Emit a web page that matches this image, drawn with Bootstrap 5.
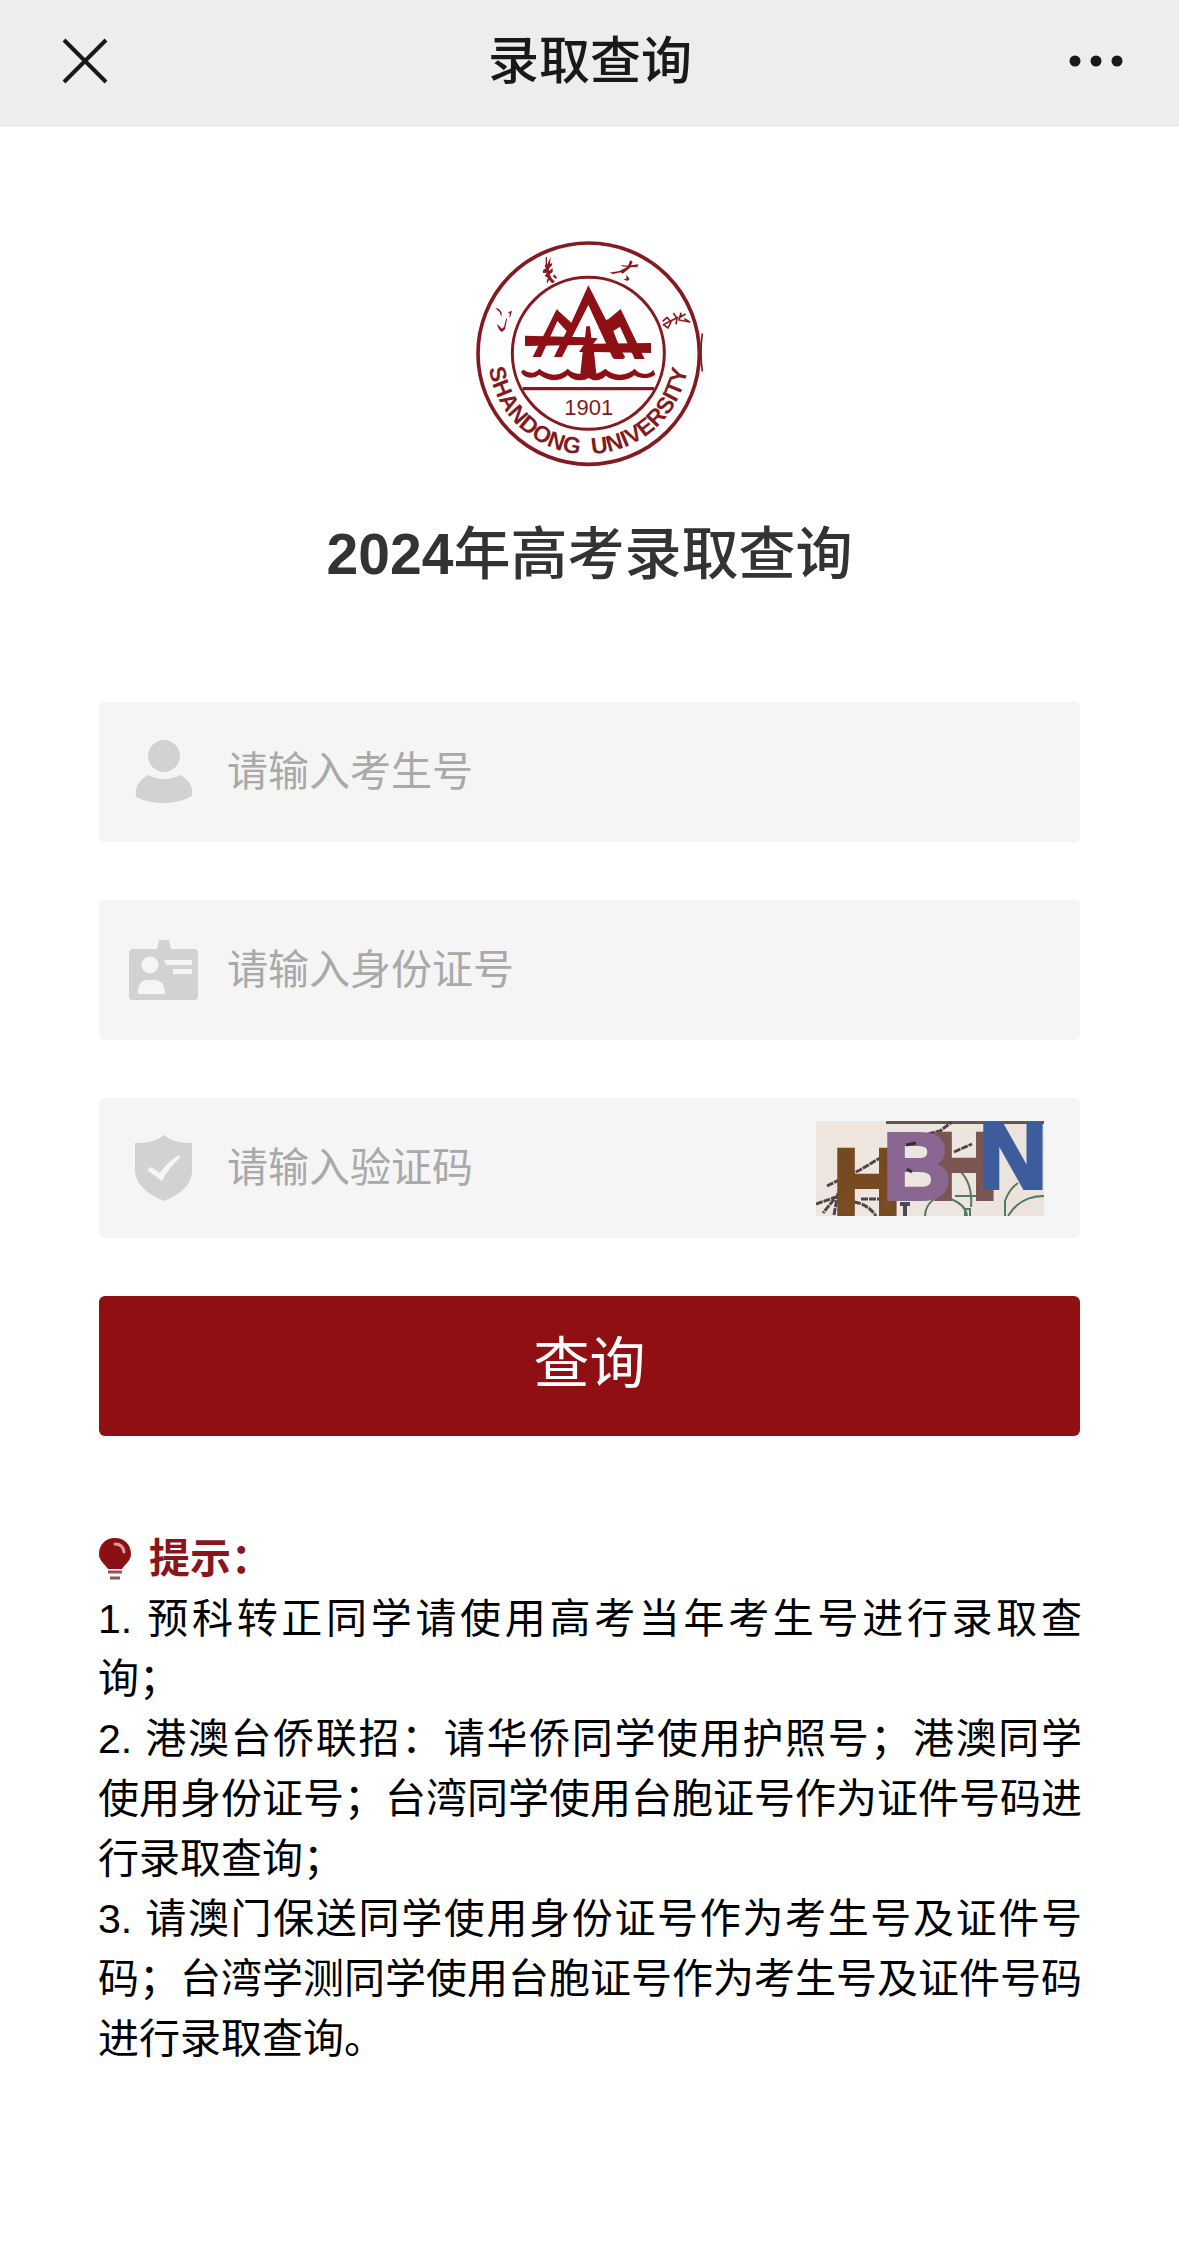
<!DOCTYPE html>
<html lang="zh-CN">
<head>
<meta charset="utf-8">
<meta name="viewport" content="width=device-width, initial-scale=1">
<title>录取查询</title>
<link href="https://cdn.jsdelivr.net/npm/bootstrap@5.3.0/dist/css/bootstrap.min.css" rel="stylesheet">
<style>
  body { font-family: "Liberation Sans", "Noto Sans CJK SC", sans-serif; color: #000; background: #fff; }
  .topbar { background: #ededed; height: 127px; padding: 0 56px 3px 57px; color: #191919; }
  .topbar-title { font-size: 51px; line-height: 60px; font-weight: 500; }
  .topbar .btn { width: 56px; height: 56px; }
  .page { padding: 98px 99px 120px; }
  .emblem { width: 260px; height: 255px; }
  .page-title { font-size: 57px; line-height: 80px; color: #333; font-weight: 500; margin: 34px 0 108px; }
  .field-list { gap: 58px; }
  .field { height: 140px; background: #f5f5f5; border-radius: 5px; padding: 0 36px 0 30px; }
  .field-icon { width: 69px; height: 72px; }
  .field .form-control { font-size: 41px; line-height: 60px; color: #333; padding: 0 0 0 29px; }
  .field .form-control::placeholder { color: #a9a9a9; opacity: 1; }
  .captcha { width: 228px; height: 95px; }
  .btn-query { height: 140px; background: #8f0f13; color: #fff; font-size: 56px; line-height: 80px; border-radius: 6px; padding: 0 0 4px; }
  .btn-query:hover, .btn-query:active { background: #7a0c10; color: #fff; }
  .tips { margin: 93px -2px 0 -1px; font-size: 41px; line-height: 60px; }
  .tips-head { color: #8a161b; font-size: 41px; line-height: 60px; font-weight: 700; gap: 17px; }
  .tips-text { text-align: justify; }
</style>
</head>
<body>
<header class="topbar d-flex align-items-center justify-content-between">
  <button type="button" class="btn border-0 p-0 d-flex" aria-label="关闭">
    <svg width="56" height="56" viewBox="0 0 56 56" fill="none" stroke="#191919" stroke-width="4"><path d="M7 6 49 48M49 6 7 48"/></svg>
  </button>
  <div class="topbar-title">录取查询</div>
  <button type="button" class="btn border-0 p-0 d-flex" aria-label="更多">
    <svg width="56" height="56" viewBox="0 0 56 56" fill="#191919"><circle cx="8" cy="27" r="5.5"/><circle cx="29" cy="27" r="5.5"/><circle cx="50" cy="27" r="5.5"/></svg>
  </button>
</header>

<main class="page">
  <div class="d-flex justify-content-center">
    <svg class="emblem" viewBox="0 0 780 765" role="img" aria-label="山东大学校徽">
      <defs>
        <path id="arcLeft" d="M87 430A301 301 0 0 0 410 687"/>
        <path id="arcRight" d="M396 687A301 301 0 0 0 686 390"/>
      </defs>
      <g fill="none" stroke="#841a20">
        <circle cx="386" cy="386" r="332" stroke-width="11"/>
        <circle cx="385" cy="385" r="228" stroke-width="9"/>
        <path d="M188 491H582" stroke-width="10"/>
        <path d="M727 325Q719 382 727 440" stroke-width="5"/>
      </g>
      <g fill="#8e1015">
        <!-- peaks -->
        <path d="M385 181 496 398H458L385 240 306 396H282L320 318 292 288 243 396H218L290 253 334 293Z"/>
        <path d="M425 290 446 282 482 252 554 402H524L480 305 460 318 492 402H462L440 350Z"/>
        <!-- bands and trunk -->
        <path d="M195 332 375 337 379 304H390L394 338 413 340 400 356 573 354V384L402 381 409 446Q425 440 437 431 448 445 478 449 508 447 524 431 534 445 556 447 574 444 580 434L586 449Q572 460 548 459 532 457 523 451 508 465 478 466 450 463 438 452 425 466 400 466L386 459Q370 470 345 464 330 459 323 451 308 464 282 466 256 463 238 449 222 462 200 456 186 450 183 440L190 434Q205 445 219 443 232 440 238 431 252 445 282 449 308 447 323 431 336 445 361 447L368 381H357L371 360 195 363Z"/>
      </g>
      <!-- brush characters round the rim -->
      <g fill="#8a1a20">
        <path d="M105 248 117 252 125 263 124 276 119 262ZM110 297 119 304 125 311 132 306 139 278 141 283 135 313 126 321 118 315ZM144 262 156 257 152 273 147 279 150 267Z"/>
        <path d="M257 95 261 97 261 120 272 96 270 118 277 113 276 121 268 129 266 138 278 130 278 141 269 148 275 160 285 170 276 175 267 164 262 176 260 168 264 158 254 153 261 143 249 144 249 135 258 130 254 124 257 117ZM283 148 292 159 286 161 279 154Z"/>
        <path d="M447 143 478 138 502 126 487 124 482 120 504 122 511 106 518 110 513 121 536 118 532 126 512 127 488 146 482 142 460 147ZM499 149 509 162 502 168 490 163 499 161Z"/>
      </g>
      <path d="M608 289 621 277 633 291 624 309 610 299 633 287 655 277M640 264 651 280 648 298M663 263 657 285 689 291 673 281M677 267 660 277 665 268" fill="none" stroke="#8a1a20" stroke-width="5" stroke-linejoin="round"/>
      <g fill="#841a20" font-family="Liberation Sans, sans-serif">
        <text font-size="69" font-weight="700"><textPath href="#arcLeft">SHANDONG</textPath></text>
        <text font-size="69" font-weight="700"><textPath href="#arcRight">UNIVERSITY</textPath></text>
        <text x="386" y="570" font-size="66" text-anchor="middle">1901</text>
      </g>
    </svg>
  </div>
  <h1 class="page-title text-center"><span class="fw-bold">2024</span>年高考录取查询</h1>

  <form class="field-list d-flex flex-column">
    <div class="field d-flex align-items-center">
      <label for="examNo" class="flex-shrink-0 d-flex" aria-label="考生号">
        <svg class="field-icon" viewBox="0 0 69 72" fill="#d2d2d2"><circle cx="35" cy="20" r="16"/><path d="M19 39Q35 47 51 39 60 43 63 53V60Q51 67 35 67T7 61Q5 47 19 39Z"/></svg>
      </label>
      <input id="examNo" type="text" class="form-control border-0 bg-transparent shadow-none" placeholder="请输入考生号">
    </div>
    <div class="field d-flex align-items-center">
      <label for="idNo" class="flex-shrink-0 d-flex" aria-label="身份证号">
        <svg class="field-icon" viewBox="0 0 69 72" fill="#d2d2d2"><path d="M28 15 30 6H40L42 15H65Q69 15 69 19V62Q69 66 65 66H4Q0 66 0 62V19Q0 15 4 15Z"/><g fill="#f5f5f5"><circle cx="21" cy="31" r="8.500"/><path d="M9 60Q8 47 18 46H26Q36 47 36 60ZM35 26H63V31H37ZM44 35H63V40H44Z"/></g></svg>
      </label>
      <input id="idNo" type="text" class="form-control border-0 bg-transparent shadow-none" placeholder="请输入身份证号">
    </div>
    <div class="field d-flex align-items-center">
      <label for="vcode" class="flex-shrink-0 d-flex" aria-label="验证码">
        <svg class="field-icon" viewBox="0 0 69 72"><path fill="#d2d2d2" d="M35 3Q46 12 63 11V40Q62 58 35 69 8 58 6 40V11Q24 12 35 3Z"/><path fill="#f5f5f5" d="M18 38 22 35 31 41Q39 29 50 23L51 26Q41 34 33 49Z"/></svg>
      </label>
      <input id="vcode" type="text" class="form-control border-0 bg-transparent shadow-none" placeholder="请输入验证码">
      <svg class="captcha flex-shrink-0" viewBox="0 0 228 95" role="img" aria-label="验证码图片 HBHN">
        <defs>
          <linearGradient id="paper"><stop offset="0" stop-color="#efe5df"/><stop offset=".6" stop-color="#ece6df"/><stop offset="1" stop-color="#e9e3dc"/></linearGradient>
          <linearGradient id="inkH" x2="0" y2="1"><stop offset="0" stop-color="#704428"/><stop offset="1" stop-color="#80501c"/></linearGradient>
        </defs>
        <rect width="228" height="95" fill="url(#paper)"/>
        <path d="M70 1H228" stroke="#67564f" stroke-width="4"/>
        <g fill="none" stroke="#51434a" stroke-width="3" stroke-dasharray="7 1">
          <path d="M11 65 25 58 44 49 64 37M0 83 20 76 7 92M18 94 22 72M38 81Q52 83 60 95M112 13 124 10 136 1M138 31 156 23M45 78H70"/>
        </g>
        <path d="M84 83H94M89 83V95" stroke="#4b4a50" stroke-width="4"/>
        <g fill="none" stroke="#55795f" stroke-width="2">
          <path d="M118 78Q109 85 109 95M135 78Q150 84 151 95M143 49Q157 62 155 86M139 75H165M189 95V80Q193 68 202 62M192 95Q204 75 228 75M149 95V88H154V95"/>
        </g>
        <g font-family="Liberation Sans, sans-serif" font-weight="700" font-size="94" stroke-width="4">
          <text x="17" y="94" fill="url(#inkH)" stroke="#784a22">H</text>
          <text x="148" y="78" fill="#7a5552" stroke="#7a5552" text-anchor="middle">H</text>
          <text x="67" y="78" fill="#8a6692" stroke="#8a6692">B</text>
          <text x="163" y="67" fill="#3d5c9c" stroke="#3d5c9c">N</text>
        </g>
        <path d="M90 24 100 22M91 48 96 51" stroke="#372c38" stroke-width="3"/>
      </svg>
    </div>
    <button type="submit" class="btn btn-query w-100 border-0">查询</button>
  </form>

  <section class="tips">
    <h2 class="tips-head d-flex align-items-center mb-0">
      <svg width="34" height="42" viewBox="0 0 34 42" class="flex-shrink-0"><path fill="#8a1014" d="M17 0C27 0 33 7 33 16 33 23 27 26 24 31H10C7 26 1 23 1 16 1 7 7 0 17 0Z"/><path d="M17 6Q25 6 26 14" fill="none" stroke="#d79a9c" stroke-width="3" stroke-linecap="round"/><path d="M10 34H24M12 40H22" stroke="#9b5054" stroke-width="3"/></svg>
      <span>提示：</span>
    </h2>
    <p class="tips-text mb-0">1. 预科转正同学请使用高考当年考生号进行录取查询；</p>
    <p class="tips-text mb-0">2. 港澳台侨联招：请华侨同学使用护照号；港澳同学使用身份证号；台湾同学使用台胞证号作为证件号码进行录取查询；</p>
    <p class="tips-text mb-0">3. 请澳门保送同学使用身份证号作为考生号及证件号码；台湾学测同学使用台胞证号作为考生号及证件号码进行录取查询。</p>
  </section>
</main>
<script src="https://cdn.jsdelivr.net/npm/bootstrap@5.3.0/dist/js/bootstrap.bundle.min.js"></script>
</body>
</html>
